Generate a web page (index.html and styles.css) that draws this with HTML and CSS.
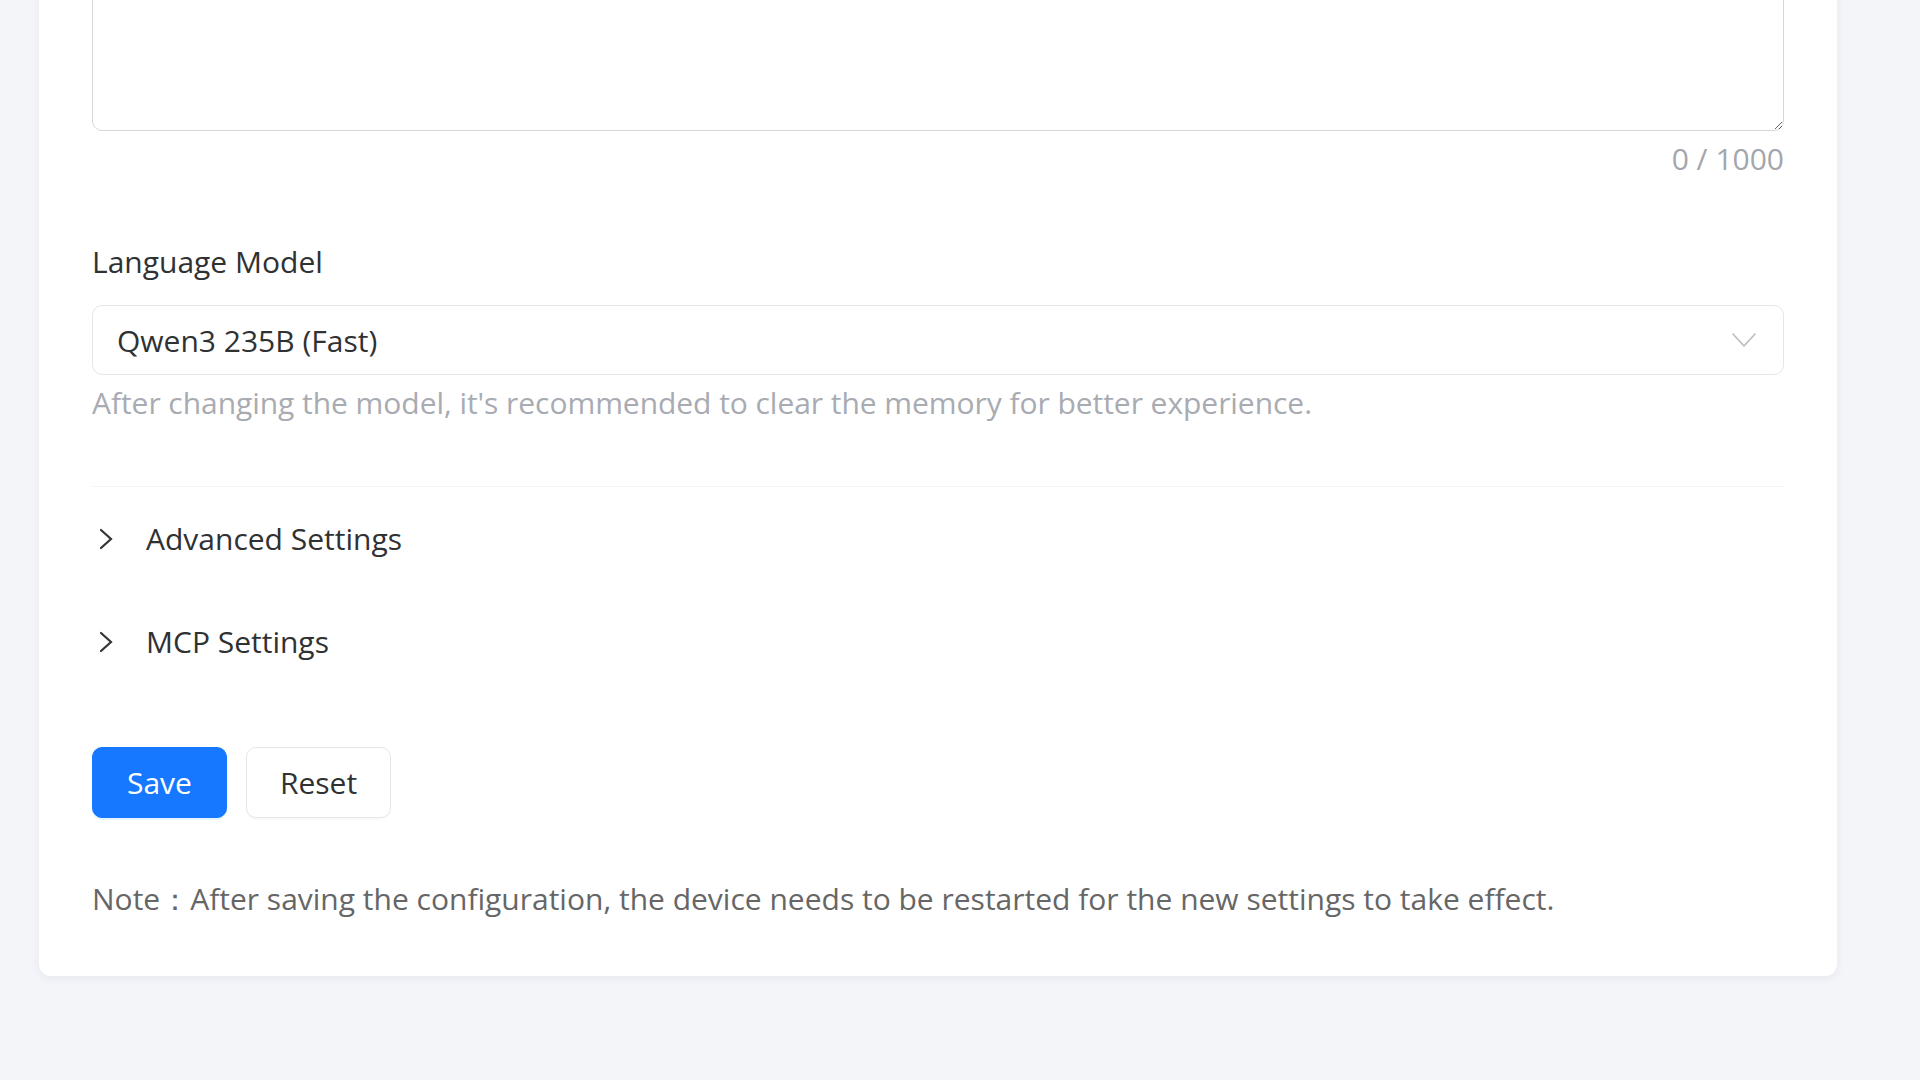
FILE: index.html
```html
<!DOCTYPE html>
<html lang="en">
<head>
<meta charset="utf-8">
<title>Agent Settings</title>
<link rel="stylesheet" href="styles.css">
</head>
<body>
<div class="page">
  <section class="card">
    <div class="field field-textarea">
      <textarea class="textarea" maxlength="1000"></textarea>
      <div class="counter">0 / 1000</div>
    </div>

    <div class="field">
      <label class="label">Language Model</label>
      <div class="select">
        <span class="select-value">Qwen3 235B (Fast)</span>
        <svg class="select-arrow" width="24" height="14" viewBox="0 0 24 14" aria-hidden="true">
          <path d="M1 1 L12 13 L23 1" fill="none" stroke="#b4b7be" stroke-width="1.4" stroke-linejoin="round" stroke-linecap="round"/>
        </svg>
      </div>
      <div class="hint">After changing the model, it's recommended to clear the memory for better experience.</div>
    </div>

    <div class="collapse">
      <div class="collapse-item">
        <svg class="chev" width="16" height="22" viewBox="0 0 16 22" aria-hidden="true">
          <path d="M3 2 L13 11 L3 20" fill="none" stroke="#333" stroke-width="2.2" stroke-linejoin="miter" stroke-linecap="round"/>
        </svg>
        <span class="collapse-title">Advanced Settings</span>
      </div>
      <div class="collapse-item">
        <svg class="chev" width="16" height="22" viewBox="0 0 16 22" aria-hidden="true">
          <path d="M3 2 L13 11 L3 20" fill="none" stroke="#333" stroke-width="2.2" stroke-linejoin="miter" stroke-linecap="round"/>
        </svg>
        <span class="collapse-title">MCP Settings</span>
      </div>
    </div>

    <div class="actions">
      <button class="btn btn-primary" type="button">Save</button>
      <button class="btn btn-default" type="button">Reset</button>
    </div>

    <p class="note">Note：After saving the configuration, the device needs to be restarted for the new settings to take effect.</p>
  </section>
</div>
</body>
</html>
```
FILE: styles.css
```css
* { box-sizing: border-box; }

html, body {
  margin: 0;
  padding: 0;
}

body {
  background: #f4f5f9;
  font-family: "Open Sans", "Noto Sans", sans-serif;
  color: #333;
  height: 1080px;
  overflow: hidden;
}

.page {
  padding: 0 83px 0 39px;
}

.card {
  margin-top: -60px;
  background: #fff;
  border-radius: 12px;
  box-shadow: 0 3px 10px rgba(30, 40, 80, 0.06);
  padding: 0 53px 57px 53px;
}

.field-textarea {
  display: flex;
  flex-direction: column;
}

.textarea {
  display: block;
  width: 100%;
  height: 191px;
  border: 1px solid #d4d6dc;
  border-radius: 10px;
  resize: vertical;
  font-family: inherit;
  font-size: 30px;
  padding: 10px 20px;
  background: #fff;
}

.counter {
  margin-top: 8px;
  text-align: right;
  font-size: 30px;
  line-height: 40px;
  color: #a3a6ad;
}

.field {
  display: flex;
  flex-direction: column;
}

.label {
  margin-top: 63px;
  font-size: 30px;
  line-height: 40px;
  color: #303133;
}

.select {
  margin-top: 23px;
  height: 70px;
  border: 1px solid #e3e5ea;
  border-radius: 10px;
  display: flex;
  align-items: center;
  justify-content: space-between;
  padding: 0 27px 0 24px;
  background: #fff;
}

.select-value {
  font-size: 30px;
  color: #303133;
}

.hint {
  margin-top: 8px;
  font-size: 30px;
  line-height: 40px;
  color: #a8abb2;
  letter-spacing: -0.05px;
}

.collapse {
  margin-top: 63px;
  border-top: 1px solid #f2f3f5;
}

.collapse-item {
  height: 103px;
  display: flex;
  align-items: center;
  padding-left: 6px;
}

.chev {
  flex: none;
}

.collapse-title {
  margin-left: 32px;
  font-size: 30px;
  color: #303133;
}

.actions {
  margin-top: 54px;
  display: flex;
  gap: 19px;
}

.btn {
  height: 71px;
  border-radius: 10px;
  font-family: inherit;
  font-size: 30px;
  cursor: pointer;
}

.btn-primary {
  padding: 0 34px;
  background: #1677ff;
  border: 1px solid #1677ff;
  color: #fff;
  box-shadow: 0 2px 0 rgba(5, 145, 255, 0.1);
}

.btn-default {
  padding: 0 33px;
  background: #fff;
  border: 1px solid #e4e6ea;
  color: #303133;
  box-shadow: 0 2px 0 rgba(0, 0, 0, 0.02);
}

.note {
  margin: 61px 0 0;
  font-size: 30px;
  line-height: 40px;
  color: #666;
}
```
